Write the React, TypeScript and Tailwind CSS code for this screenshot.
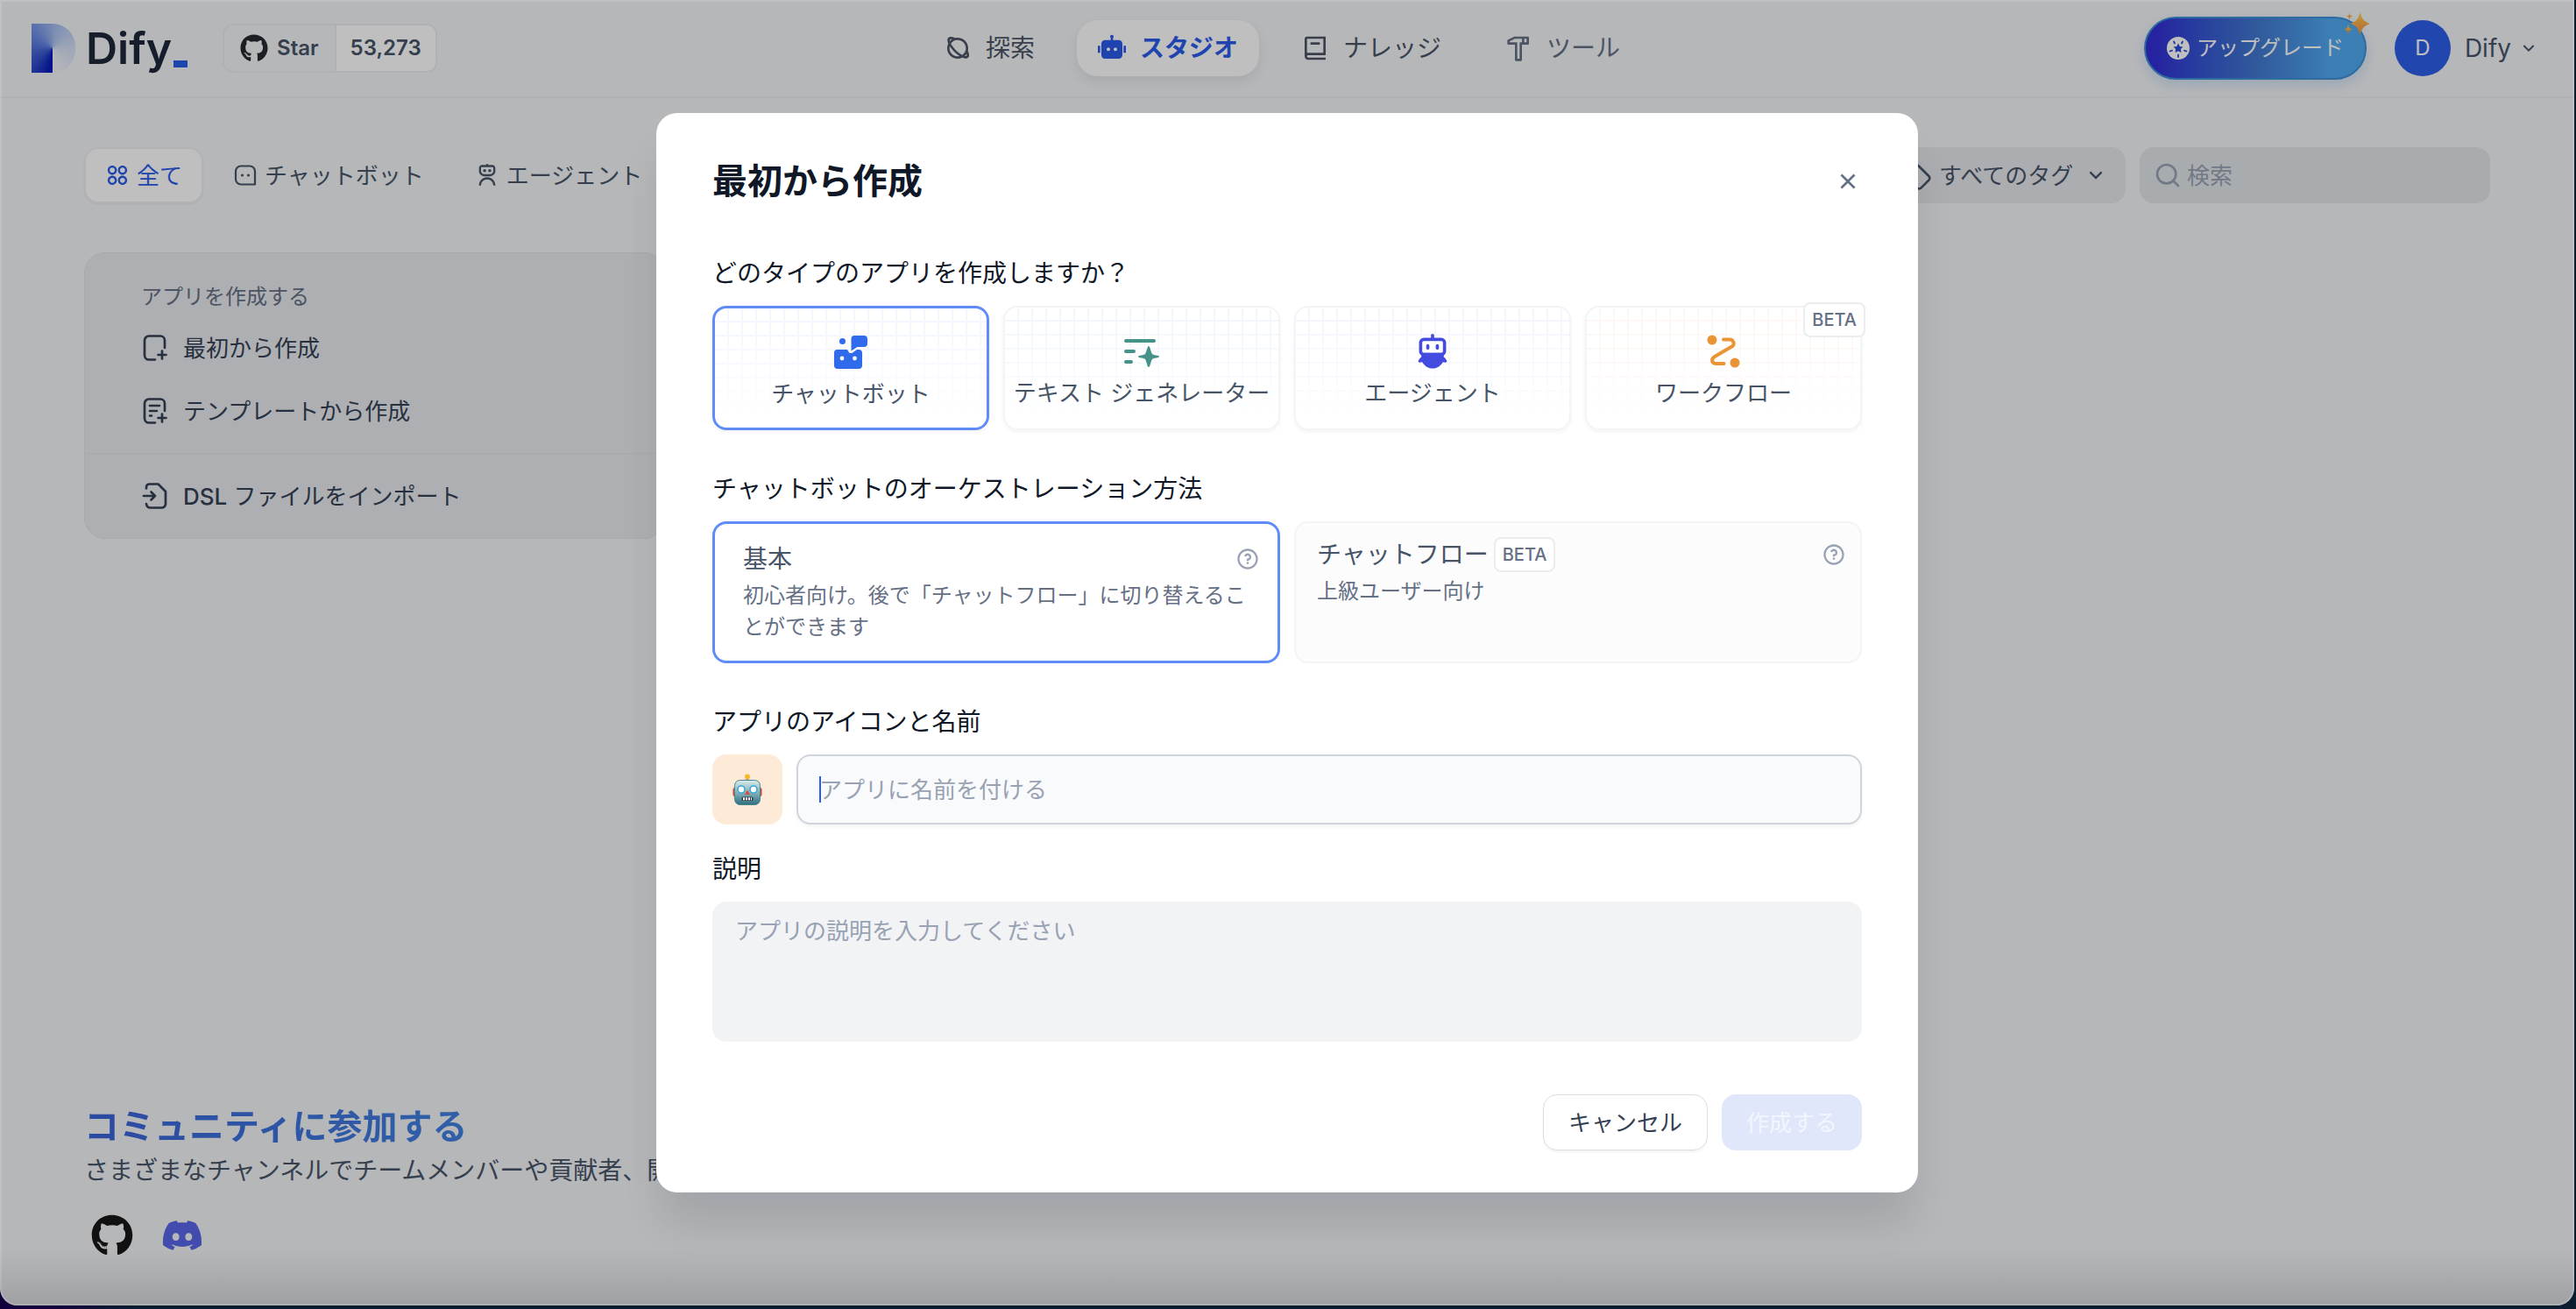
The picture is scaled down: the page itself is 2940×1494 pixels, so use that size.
import React, { useState } from 'react';
import { FaDiscord, FaGithub } from 'react-icons/fa';
import {
  RiApps2Line,
  RiArrowDownSLine,
  RiBook2Line,
  RiCloseLine,
  RiHammerLine,
  RiPlanetLine,
  RiQuestionLine,
  RiRobot2Fill,
  RiRobot3Line,
} from 'react-icons/ri';
import { Search, Tag } from 'lucide-react';

interface IconProps {
  className?: string;
}

const ChatTabIcon: React.FC<IconProps> = ({ className }) => (
  <svg className={className} viewBox="0 0 28 28" fill="none" stroke="currentColor" strokeWidth="2.2">
    <path d="M9 3.5h10A6 6 0 0 1 25 9.5V24.5H9A6 6 0 0 1 3 18.500V9.500A6 6 0 0 1 9 3.500Z" strokeLinejoin="round" />
    <circle cx="10.500" cy="14" r="1.600" fill="currentColor" stroke="none" />
    <circle cx="17.500" cy="14" r="1.600" fill="currentColor" stroke="none" />
  </svg>
);

const FilePlusIcon: React.FC<IconProps & { lines?: boolean }> = ({ className, lines }) => (
  <svg className={className} viewBox="0 0 32 32" fill="none" stroke="currentColor" strokeWidth="2.7" strokeLinecap="round" strokeLinejoin="round">
    <path d="M27 16V7.500A5 5 0 0 0 22 2.500H9A5 5 0 0 0 4 7.500V24.500A5 5 0 0 0 9 29.500H16" />
    <path d="M24 19.500V28.500M19.500 24H28.500" />
    {lines && <path d="M10 10H21M10 16H18M10 21.500H12" />}
  </svg>
);

const FileImportIcon: React.FC<IconProps> = ({ className }) => (
  <svg className={className} viewBox="0 0 32 32" fill="none" stroke="currentColor" strokeWidth="2.7" strokeLinecap="round" strokeLinejoin="round">
    <path d="M6 7.500V6A3.500 3.500 0 0 1 9.500 2.500H19.500L28 11V25A4.500 4.500 0 0 1 23.500 29.500H10.500A4.500 4.500 0 0 1 6 25" />
    <path d="M3 16H16M11.500 11.500 16 16 11.500 20.500" />
  </svg>
);

const ChatbotIcon: React.FC<IconProps> = ({ className }) => (
  <svg className={className} viewBox="0 0 40 40" fill="none">
    <circle cx="10.500" cy="7.500" r="3.500" fill="#2f6bea" />
    <path d="M24 1H35A4 4 0 0 1 39 5V10A4 4 0 0 1 35 14H27.500L20.500 18.500V4.500A3.500 3.500 0 0 1 24 1Z" fill="#2f6bea" />
    <path d="M4.500 17H16L18.500 21H21.500L27 17H29A4 4 0 0 1 33 21V35A4 4 0 0 1 29 39H5A4 4 0 0 1 1 35V20.500A3.500 3.500 0 0 1 4.500 17Z" fill="#2f6bea" />
    <circle cx="10" cy="27" r="2.400" fill="#fff" />
    <circle cx="24.500" cy="27" r="2.400" fill="#fff" />
  </svg>
);

const TextGeneratorIcon: React.FC<IconProps> = ({ className }) => (
  <svg className={className} viewBox="0 0 40 40" fill="none">
    <path d="M2 8H34M2 20H11M2 32H8" stroke="#459388" strokeWidth="4" strokeLinecap="round" />
    <path d="M28 14C29.600 14 30.500 21 32 23C33.500 24.500 40 24.500 40 26C40 27.500 33.500 27.500 32 29C30.500 31 29.600 38 28 38C26.400 38 25.500 31 24 29C22.500 27.500 16 27.500 16 26C16 24.500 22.500 24.500 24 23C25.500 21 26.400 14 28 14Z" fill="#459388" />
  </svg>
);

const AgentIcon: React.FC<IconProps> = ({ className }) => (
  <svg className={className} viewBox="0 0 40 44" fill="none">
    <path d="M20 2V6" stroke="#444ce0" strokeWidth="4" strokeLinecap="round" />
    <rect x="5" y="7" width="30" height="19" rx="4" stroke="#444ce0" strokeWidth="4" />
    <path d="M14 15V18M26 15V18" stroke="#444ce0" strokeWidth="4" strokeLinecap="round" />
    <path d="M6 24H34V29C36 31 38 33 38 35C37 36.500 35 36 33 35.500C30.500 40 26 43.500 20 43.500C14 43.500 9.500 40 7 35.500C5 36 3 36.500 2 35C2 33 4 31 6 29Z" fill="#444ce0" />
  </svg>
);

const WorkflowIcon: React.FC<IconProps> = ({ className }) => (
  <svg className={className} viewBox="0 0 40 40" fill="none">
    <circle cx="7" cy="7" r="5.500" fill="#ea9435" />
    <circle cx="33" cy="33" r="5.500" fill="#ea9435" />
    <path d="M20 6.500H27.500A4.500 4.500 0 0 1 30.500 14L10 26C5 29.500 7 34 12 34H20.500" stroke="#ea9435" strokeWidth="4" strokeLinecap="round" />
  </svg>
);

const RobotFace: React.FC<IconProps> = ({ className }) => (
  <svg className={className} viewBox="0 0 34 36" fill="none">
    <defs>
      <linearGradient id="robotHead" x1="0" y1="0" x2="0" y2="1">
        <stop offset="0" stopColor="#d9ecea" />
        <stop offset="0.500" stopColor="#86b3ba" />
        <stop offset="1" stopColor="#2d6f80" />
      </linearGradient>
    </defs>
    <rect x="0.500" y="16" width="5" height="10" rx="2" fill="#c9483c" />
    <rect x="28.500" y="16" width="5" height="10" rx="2" fill="#c9483c" />
    <circle cx="17" cy="3.500" r="3" fill="#f7b733" />
    <path d="M12.500 9C12.500 5.500 21.500 5.500 21.500 9Z" fill="#6a4a86" />
    <rect x="2.500" y="7.500" width="29" height="28" rx="6" fill="url(#robotHead)" stroke="#4e8690" />
    <circle cx="10" cy="18" r="4" fill="#fff" stroke="#39a9d8" strokeWidth="1.600" />
    <circle cx="24" cy="18" r="4" fill="#fff" stroke="#39a9d8" strokeWidth="1.600" />
    <path d="M17 18.500 20 24H14Z" fill="#d4513f" />
    <rect x="10.500" y="26.500" width="13" height="4.500" rx="1.500" fill="#2b3a44" />
    <path d="M12 28.800H22" stroke="#fff" strokeWidth="3" strokeDasharray="2 1" />
  </svg>
);

const Sparkles: React.FC<IconProps> = ({ className }) => (
  <svg className={className} viewBox="0 0 32 28">
    <defs>
      <linearGradient id="sparkle" x1="0" y1="0" x2="0" y2="1">
        <stop offset="0" stopColor="#ffd24d" />
        <stop offset="1" stopColor="#f08a4b" />
      </linearGradient>
    </defs>
    <g fill="url(#sparkle)">
      <path d="M18.500 1C20.500 8.500 22.500 11 30 14C22.500 17 20.500 19.500 18.500 27C16.500 19.500 15 17 7.500 14C15 11 16.500 8.500 18.500 1Z" />
      <path d="M6.500 1C7 4 7.500 5 10.500 5.500C7.500 6 7 7 6.500 10C6 7 5.500 6 3 5.500C5.500 5 6 4 6.500 1Z" />
      <path d="M5 14.500C5.600 18.500 6.500 19.500 10 20.500C6.500 21.500 5.600 22.500 5 26.500C4.400 22.500 3.500 21.500 0.500 20.500C3.500 19.500 4.400 18.500 5 14.500Z" />
    </g>
  </svg>
);

const UpgradeIcon: React.FC<IconProps> = ({ className }) => (
  <svg className={className} viewBox="0 0 26 26">
    <circle cx="13" cy="13" r="13" fill="#fff" />
    <path d="M13 7.500 14.800 11 18.500 11.500 15.900 14 16.500 18 13 16.200 9.500 18 10.100 14 7.500 11.500 11.200 11Z" fill="#2b49d8" />
    <path d="M13 20.500V23M8 5.500 9 7.500M18 5.500 17 7.500M3.500 16.500 6 15.700M22.500 16.500 20 15.700" stroke="#2b49d8" strokeWidth="1.800" strokeLinecap="round" />
  </svg>
);

const navItems = [
  { label: '探索', icon: RiPlanetLine, style: 'text-[#4b5565]' },
  { label: 'スタジオ', icon: RiRobot2Fill, style: 'bg-white font-bold text-[#2b5bea] shadow-[0_6px_14px_rgba(16,24,40,0.08)]' },
  { label: 'ナレッジ', icon: RiBook2Line, style: 'text-[#4b5565]' },
  { label: 'ツール', icon: RiHammerLine, style: 'text-[#667085]' },
];

const tabs = [
  { label: '全て', icon: RiApps2Line, style: 'bg-white border-[#eceef2] text-[#2b5bea] shadow-xs' },
  { label: 'チャットボット', icon: ChatTabIcon, style: 'border-transparent text-[#475467]' },
  { label: 'エージェント', icon: RiRobot3Line, style: 'border-transparent text-[#475467]' },
];

const appTypes = [
  {
    id: 'chatbot',
    label: 'チャットボット',
    icon: ChatbotIcon,
    grid: 'bg-[linear-gradient(#f4f7ff_2px,transparent_2px),linear-gradient(90deg,#f4f7ff_2px,transparent_2px)]',
  },
  {
    id: 'completion',
    label: 'テキスト ジェネレーター',
    icon: TextGeneratorIcon,
    grid: 'bg-[linear-gradient(#f2f7fd_2px,transparent_2px),linear-gradient(90deg,#f2f7fd_2px,transparent_2px)]',
  },
  {
    id: 'agent',
    label: 'エージェント',
    icon: AgentIcon,
    grid: 'bg-[linear-gradient(#f5f5fe_2px,transparent_2px),linear-gradient(90deg,#f5f5fe_2px,transparent_2px)]',
  },
  {
    id: 'workflow',
    label: 'ワークフロー',
    icon: WorkflowIcon,
    grid: 'bg-[linear-gradient(#fef7f4_2px,transparent_2px),linear-gradient(90deg,#fef7f4_2px,transparent_2px)]',
  },
];

const BetaBadge = () => (
  <span className="flex h-10 items-center rounded-lg border-2 border-[#ebecee] bg-white px-2 text-[20px] font-medium text-[#667085]">
    BETA
  </span>
);

const Header = () => (
  <header className="flex h-28 items-center border-b-2 border-[#eaecf0] pl-9 pr-10">
    <div className="flex flex-1 items-center">
      <a href="#home" className="flex items-center gap-3 text-[#1d2939]">
        <span className="h-14 w-[50px] rounded-r-[26px] bg-[conic-gradient(from_180deg_at_24px_28px,#0010b8_0deg,#3350cc_50deg,#6f8fe6_130deg,#a9c0ee_190deg,#cfdcf4_260deg,#f4f4f8_360deg)]" />
        <span className="flex items-end gap-0.5">
          <span className="text-[50px] font-semibold leading-[56px]">Dify</span>
          <span className="mb-1.5 h-2 w-4 bg-[#2b5bea]" />
        </span>
      </a>
      <a href="#github" className="ml-10 flex h-14 items-center overflow-hidden rounded-xl border-2 border-[#eaecf0] text-[24px] font-semibold text-[#475467]">
        <span className="flex h-full items-center gap-2.5 px-[18px]">
          <FaGithub className="size-8 text-[#24292f]" />
          Star
        </span>
        <span className="flex h-full items-center border-l-2 border-[#eaecf0] bg-white px-4">53,273</span>
      </a>
    </div>
    <nav className="mr-2 flex gap-6">
      {navItems.map(({ label, icon: Icon, style }) => (
        <a key={label} href="#nav" className={`flex h-16 items-center gap-4 rounded-3xl px-6 text-[28px] ${style}`}>
          <Icon className="size-8" />
          {label}
        </a>
      ))}
    </nav>
    <div className="flex flex-1 items-center justify-end">
      <div className="relative mr-8">
        <button className="flex h-[72px] items-center gap-2 rounded-full border-2 border-[#3c8fd6] bg-linear-to-r from-[#332fd6] from-5% via-[#4177cf] to-[#51aaf0] to-85% px-6 text-[24px] text-white shadow-[0_6px_14px_rgba(60,140,220,0.2)]">
          <UpgradeIcon className="size-[26px]" />
          アップグレード
        </button>
        <Sparkles className="absolute -right-1.5 -top-1.5 h-7 w-8" />
      </div>
      <button className="flex items-center gap-4 text-[28px] text-[#475467]">
        <span className="flex size-16 items-center justify-center rounded-full bg-[#2d5ee8] text-[24px] text-white">D</span>
        <span className="flex items-center gap-2">
          Dify
          <RiArrowDownSLine className="size-6" />
        </span>
      </button>
    </div>
  </header>
);

const Studio = () => (
  <main className="flex flex-1 flex-col px-24 pb-14 pt-14">
    <div className="flex items-center justify-between">
      <div className="flex gap-2.5">
        {tabs.map(({ label, icon: Icon, style }) => (
          <button key={label} className={`flex h-16 items-center gap-2 rounded-2xl border-2 px-[22px] text-[26px] ${style}`}>
            <Icon className="size-7" />
            {label}
          </button>
        ))}
      </div>
      <div className="flex gap-4">
        <div className="relative">
          <Tag className="absolute left-6 top-[18px] size-8 text-[#475467]" />
          <select aria-label="タグ" className="h-16 appearance-none rounded-2xl bg-[#e6e7eb] pl-16 pr-14 text-[26px] text-[#475467]">
            <option>すべてのタグ</option>
          </select>
          <RiArrowDownSLine className="pointer-events-none absolute right-5 top-[18px] size-7 text-[#475467]" />
        </div>
        <div className="relative">
          <Search className="absolute left-4 top-4 size-8 text-[#98a2b3]" />
          <input
            type="search"
            aria-label="検索"
            placeholder="検索"
            className="h-16 w-[400px] rounded-2xl bg-[#e2e6ea] pl-[54px] pr-4 text-[26px] placeholder:text-[#98a2b3]"
          />
        </div>
      </div>
    </div>

    <div className="mt-14 grid grid-cols-4 gap-8">
      <div className="rounded-3xl border border-[#dfe2e7] bg-[#e8eaee] text-[26px] text-[#344054]">
        <div className="px-11 pb-3 pt-8">
          <p className="mb-1 px-5 text-[24px] leading-9 text-[#667085]">アプリを作成する</p>
          <button className="flex h-[72px] items-center gap-4 px-5">
            <FilePlusIcon className="size-8" />
            最初から作成
          </button>
          <button className="flex h-[72px] items-center gap-4 px-5">
            <FilePlusIcon className="size-8" lines />
            テンプレートから作成
          </button>
        </div>
        <div className="border-t border-[#dfe2e7] px-11">
          <button className="flex h-24 items-center gap-4 px-5">
            <FileImportIcon className="size-8" />
            <span><span className="font-medium">DSL</span> ファイルをインポート</span>
          </button>
        </div>
      </div>
    </div>

    <footer className="mt-auto">
      <h3 className="w-fit bg-linear-to-r from-[#3a63d8] to-[#4280e0] bg-clip-text text-[40px] font-bold leading-[56px] text-transparent">
        コミュニティに参加する
      </h3>
      <p className="text-[28px] leading-[44px] text-[#475467]">さまざまなチャンネルでチームメンバーや貢献者、開</p>
      <div className="mt-7 flex gap-8 px-2">
        <a href="#github" aria-label="GitHub"><FaGithub className="size-12 text-[#191717]" /></a>
        <a href="#discord" aria-label="Discord"><FaDiscord className="size-12 text-[#5865e8]" /></a>
      </div>
    </footer>
  </main>
);

const CreateAppModal = () => {
  const [type, setType] = useState('chatbot');
  const [mode, setMode] = useState('basic');
  const [name, setName] = useState('');

  return (
    <div role="dialog" aria-labelledby="modal-title" className="w-full max-w-[1440px] rounded-3xl bg-white px-16 py-12 text-[#101828] shadow-[0_40px_48px_-8px_rgba(16,24,40,0.12)]">
      <div className="mb-[54px] flex items-center justify-between">
        <h2 id="modal-title" className="text-[40px] font-bold leading-[60px]">最初から作成</h2>
        <button aria-label="閉じる" className="text-[#667085]">
          <RiCloseLine className="size-8" />
        </button>
      </div>

      <p className="mb-4 text-[28px] leading-[42px]">どのタイプのアプリを作成しますか？</p>
      <div className="mb-[46px] grid grid-cols-4 gap-4">
        {appTypes.map(({ id, label, icon: Icon, grid }) => (
          <button
            key={id}
            onClick={() => setType(id)}
            className={`relative flex h-[142px] flex-col items-center gap-2 rounded-2xl pt-7 text-[26px] text-[#475467] shadow-[0_2px_4px_rgba(16,24,40,0.05)] ${
              type === id ? 'border-3 border-[#5f8cf9]' : 'border-2 border-[#f2f4f7]'
            }`}
          >
            <span className={`absolute inset-0 bg-size-[16px_16px] bg-position-[-2px_-2px] mask-b-from-10% mask-b-to-95% rounded-2xl ${grid}`} />
            <Icon className="relative size-11 shrink-0 p-0.5" />
            <span className="relative whitespace-nowrap leading-9">{label}</span>
            {id === 'workflow' && (
              <span className="absolute -right-1.5 -top-1.5">
                <BetaBadge />
              </span>
            )}
          </button>
        ))}
      </div>

      <p className="mb-4 text-[28px] leading-[42px]">チャットボットのオーケストレーション方法</p>
      <div className="mb-[46px] grid grid-cols-2 gap-4">
        <button
          onClick={() => setMode('basic')}
          className={`flex h-[162px] flex-col gap-1 rounded-2xl px-8 pt-5 text-left ${
            mode === 'basic' ? 'border-3 border-[#5f8cf9]' : 'border-2 border-[#f2f4f7] bg-[#fcfcfd]'
          }`}
        >
          <span className="-mr-3 flex h-10 items-center justify-between self-stretch text-[28px] text-[#475467]">
            基本
            <RiQuestionLine className="size-7 text-[#98a2b3]" />
          </span>
          <span className="text-[24px] leading-9 text-[#667085]">初心者向け。後で「チャットフロー」に切り替えることができます</span>
        </button>
        <button
          onClick={() => setMode('advanced')}
          className={`flex h-[162px] flex-col gap-1 rounded-2xl px-6 pt-4 text-left ${
            mode === 'advanced' ? 'border-3 border-[#5f8cf9]' : 'border-2 border-[#f2f4f7] bg-[#fcfcfd]'
          }`}
        >
          <span className="-mr-2 flex h-10 items-center justify-between self-stretch text-[28px] text-[#475467]">
            <span className="flex items-center gap-1.5">
              チャットフロー
              <BetaBadge />
            </span>
            <RiQuestionLine className="size-7 text-[#98a2b3]" />
          </span>
          <span className="text-[24px] leading-9 text-[#667085]">上級ユーザー向け</span>
        </button>
      </div>

      <label htmlFor="app-name" className="mb-4 block text-[28px] leading-[42px]">アプリのアイコンと名前</label>
      <div className="mb-[30px] flex gap-4">
        <button aria-label="アイコン" className="flex size-20 items-center justify-center rounded-2xl bg-[#fdead7]">
          <RobotFace className="h-9 w-[34px]" />
        </button>
        <div className="relative flex-1">
          <input
            id="app-name"
            value={name}
            onChange={(e) => setName(e.target.value)}
            placeholder="アプリに名前を付ける"
            className="h-20 w-full rounded-2xl border-2 border-[#d0d5dd] bg-[#f9fafb] px-6 text-[26px] shadow-[0_2px_4px_rgba(16,24,40,0.06)] placeholder:text-[#98a2b3]"
          />
          {name === '' && <span className="absolute left-[26px] top-[25px] h-[30px] w-0.5 bg-[#2b5bea]" />}
        </div>
      </div>

      <label htmlFor="app-desc" className="mb-4 block text-[28px] leading-[42px]">説明</label>
      <textarea
        id="app-desc"
        placeholder="アプリの説明を入力してください"
        className="mb-[60px] block h-40 w-full resize-none rounded-2xl bg-[#f1f3f5] px-[26px] py-4 text-[26px] leading-9 placeholder:text-[#98a2b3]"
      />

      <div className="flex justify-end gap-4 text-[26px]">
        <button className="h-16 rounded-2xl border border-[#dcdee2] px-7 text-[#344054] shadow-[0_2px_3px_rgba(16,24,40,0.05)]">キャンセル</button>
        <button disabled className="h-16 rounded-2xl bg-[#e0e7fb] px-7 text-[#f3f6fe]">作成する</button>
      </div>
    </div>
  );
};

const App: React.FC = () => (
  <div className="flex min-h-screen bg-linear-to-r from-[#12003c] from-2% to-[#0b1b30] to-5% pb-1 pr-0.5 font-['Inter','Noto_Sans_CJK_JP',sans-serif]">
    <div className="relative flex flex-1 flex-col overflow-hidden rounded-b-[20px] bg-[#f2f4f7]">
      <Header />
      <Studio />
      <div className="absolute inset-x-0 bottom-0 h-16 bg-linear-to-t from-black/12 to-transparent" />
      <div className="absolute inset-0 flex items-center justify-center rounded-b-[20px] bg-black/25 inset-ring-2 inset-ring-white/15">
        <CreateAppModal />
      </div>
    </div>
  </div>
);

export default App;
